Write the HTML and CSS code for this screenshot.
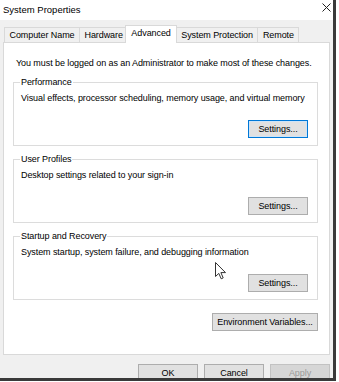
FILE: index.html
```html
<!DOCTYPE html>
<html>
<head>
<meta charset="utf-8">
<title>System Properties</title>
<link rel="stylesheet" href="styles.css">
</head>
<body>
<div class="window">
  <div class="titlebar">
    <span class="title">System Properties</span>
    <svg class="close" viewBox="0 0 9 9" width="9" height="9"><path d="M0.5 0.5L8.5 8.5M8.5 0.5L0.5 8.5" stroke="#222" stroke-width="1" fill="none"/></svg>
  </div>
  <div class="client">
    <div class="tabs">
      <div class="tab">Computer Name</div>
      <div class="tab">Hardware</div>
      <div class="tab selected">Advanced</div>
      <div class="tab">System Protection</div>
      <div class="tab">Remote</div>
    </div>
    <div class="panel">
      <p class="intro">You must be logged on as an Administrator to make most of these changes.</p>
      <fieldset class="group">
        <legend>Performance</legend>
        <p class="desc">Visual effects, processor scheduling, memory usage, and virtual memory</p>
        <div class="actions"><button class="btn settings focused">Settings...</button></div>
      </fieldset>
      <fieldset class="group">
        <legend>User Profiles</legend>
        <p class="desc">Desktop settings related to your sign-in</p>
        <div class="actions"><button class="btn settings">Settings...</button></div>
      </fieldset>
      <fieldset class="group">
        <legend>Startup and Recovery</legend>
        <p class="desc">System startup, system failure, and debugging information</p>
        <div class="actions"><button class="btn settings">Settings...</button></div>
      </fieldset>
      <div class="env"><button class="btn envvars">Environment Variables...</button></div>
    </div>
    <div class="dialog-buttons">
      <button class="btn dlg">OK</button>
      <button class="btn dlg">Cancel</button>
      <button class="btn dlg disabled">Apply</button>
    </div>
  </div>
</div>
<svg class="cursor" viewBox="0 0 12 18" width="12" height="18"><path d="M0.5 0.5L0.5 14.5L3.8 11.4L6.2 16.8L8.2 15.9L5.9 10.6L10.5 10.6Z" fill="#fff" stroke="#333" stroke-width="1" stroke-linejoin="round"/></svg>
</body>
</html>
```

FILE: styles.css
```css
html, body {
  margin: 0;
  padding: 0;
}
body {
  width: 339px;
  height: 382px;
  overflow: hidden;
  background: #ffffff;
  position: relative;
  font-family: "Liberation Sans", Arial, sans-serif;
  font-size: 9px;
  letter-spacing: -0.08px;
  color: #000;
}
.window {
  width: 333px;
  height: 378px;
  border-right: 3px solid #3a3a3a;
  border-bottom: 3px solid #3a3a3a;
  overflow: hidden;
  background: #f0f0f0;
}
.titlebar {
  height: 20px;
  background: #fff;
  display: flex;
  justify-content: space-between;
  align-items: flex-start;
  padding: 0 2px 0 3px;
}
.title {
  font-size: 9.5px;
  line-height: 14px;
  padding-top: 3px;
  letter-spacing: 0;
}
.close {
  margin-top: 3px;
  display: block;
}
.client {
  padding-top: 7px;
}
.tabs {
  display: flex;
  height: 15px;
  margin-left: 4px;
  align-items: flex-end;
}
.tab {
  height: 15px;
  box-sizing: border-box;
  border: 1px solid #d9d9d9;
  border-bottom: none;
  padding: 0 4.5px;
  line-height: 14px;
  margin-right: -1px;
  background: #f0f0f0;
  white-space: nowrap;
}
.tab.selected {
  background: #fff;
  height: 18px;
  margin: 0 -1px -1px -2px;
  padding: 0 5px;
  line-height: 15px;
  position: relative;
  z-index: 1;
}
.panel {
  margin-left: 3px;
  width: 327px;
  height: 313px;
  box-sizing: border-box;
  border: 1px solid #d9d9d9;
  background: #fff;
  padding: 0 11px 0 9px;
}
.intro {
  margin: 14px 0 7px 3px;
  line-height: 12px;
  white-space: nowrap;
}
.group {
  margin: 0;
  border: 1px solid #dcdcdc;
  padding: 4px 9px 7px 7px;
  min-width: 0;
}
.group + .group {
  margin-top: 7px;
}
.group legend {
  padding: 0 1px;
  margin-left: -1px;
  line-height: 12px;
}
.desc {
  margin: 0;
  line-height: 12px;
  white-space: nowrap;
}
.actions {
  display: flex;
  justify-content: flex-end;
  margin-top: 16px;
}
.btn {
  height: 18px;
  box-sizing: border-box;
  background: #e1e1e1;
  border: 1px solid #adadad;
  font-family: inherit;
  font-size: 9px;
  letter-spacing: inherit;
  color: #000;
  padding: 0;
  margin: 0;
  line-height: 14px;
}
.btn.settings {
  width: 60px;
}
.btn.focused {
  border-color: #0078d7;
  box-shadow: inset 0 0 0 1px #cfe4f7;
}
.env {
  display: flex;
  justify-content: flex-end;
  margin-top: 13px;
}
.btn.envvars {
  width: 106px;
}
.dialog-buttons {
  display: flex;
  justify-content: flex-end;
  gap: 6px;
  margin-top: 9px;
  padding-right: 3px;
}
.btn.dlg {
  width: 60px;
}
.btn.disabled {
  background: #d6d6d6;
  border-color: #c2c2c2;
  color: #9a9a9a;
}
.cursor {
  position: absolute;
  left: 215px;
  top: 262px;
}
```
